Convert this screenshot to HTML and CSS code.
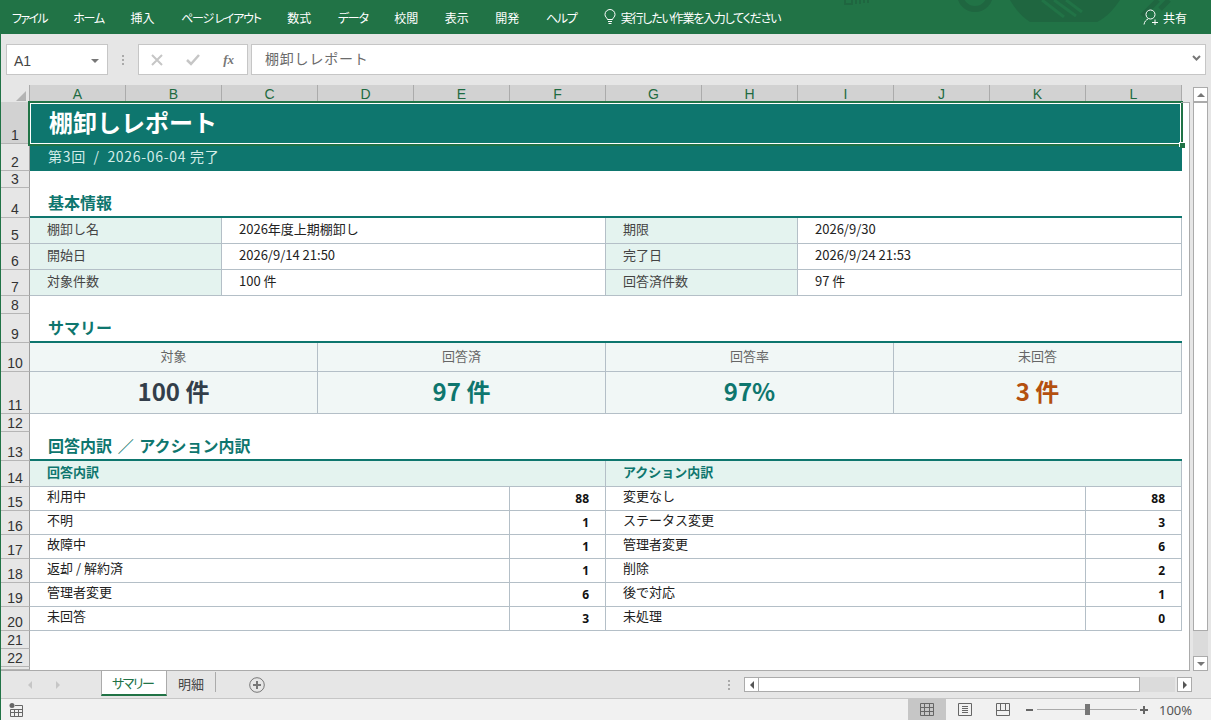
FILE: index.html
```html
<!DOCTYPE html>
<html lang="ja">
<head>
  <meta charset="UTF-8" />
  <title>棚卸しレポート - Excel</title>
  <link rel="stylesheet" href="styles.css">
</head>
<body>
<div class="app">

  <!-- ribbon tabs -->
  <header class="titlebar">
    <svg class="titlebar-art" width="360" height="34" viewBox="0 0 360 34" fill="none">
      <path d="M25 0v4h7V0M36 0v4M40 0v4M44 0v3M48 0v3" stroke="#1f6640" stroke-width="2"/>
      <circle cx="155" cy="-6" r="15" stroke="#1f6640" stroke-width="6"/>
      <path d="M190 0c5 9 12 17 20 22h67c10-5 17-13 23-22z" fill="#1f6640"/>
      <path d="M222 0l22 17M234 0l22 16M246 0l16 12" stroke="#217346" stroke-width="3"/>
      <path d="M322 16L338 0M340 9l9-9" stroke="#1f6640" stroke-width="5"/>
    </svg>
    <nav class="menu">
      <span class="file">ファイル</span><span class="kana">ホーム</span><span>挿入</span><span class="kana">ページ レイアウト</span><span>数式</span><span class="kana">データ</span><span>校閲</span><span>表示</span><span>開発</span><span class="kana">ヘルプ</span>
    </nav>
    <div class="tell-me">
      <svg width="12" height="16" viewBox="0 0 12 16" fill="none" stroke="#fff"><path d="M3.500 10.500C3 8.500 1 8 1 5.500a5 5 0 0 1 10 0C11 8 9 8.500 8.500 10.500zM4 12.500h4M4.500 14.500h3"/></svg>
      <span class="kana">実行したい作業を入力してください</span>
    </div>
    <div class="share">
      <svg width="16" height="16" viewBox="0 0 16 16" fill="none" stroke="#fff"><circle cx="7.500" cy="5.500" r="4.500"/><path d="M1 15.500c.5-3 2-4.500 4-5.500M9 13.500h6M12 10.500v6"/></svg>
      <span>共有</span>
    </div>
  </header>

  <!-- name box + formula bar -->
  <div class="formula-row">
    <div class="name-box"><span>A1</span><i class="caret-down"></i></div>
    <div class="grip"></div>
    <div class="fx-buttons">
      <svg width="12" height="12" viewBox="0 0 12 12" stroke="#c6c6c6" stroke-width="2"><path d="M1 1l10 10M11 1L1 11"/></svg>
      <svg width="14" height="12" viewBox="0 0 14 12" fill="none" stroke="#c6c6c6" stroke-width="2.500"><path d="M1 6l4 4 8-9"/></svg>
      <em>fx</em>
    </div>
    <div class="formula-input">
      <span>棚卸しレポート</span>
      <svg width="9" height="6" viewBox="0 0 9 6" fill="none" stroke="#777" stroke-width="2"><path d="M1 1l3.500 3.500L8 1"/></svg>
    </div>
  </div>

  <!-- worksheet -->
  <div class="workarea">
    <div class="sheet">
      <div class="corner"><i></i></div>
      <div class="col-head">A</div><div class="col-head">B</div><div class="col-head">C</div><div class="col-head">D</div><div class="col-head">E</div><div class="col-head">F</div><div class="col-head">G</div><div class="col-head">H</div><div class="col-head">I</div><div class="col-head">J</div><div class="col-head">K</div><div class="col-head">L</div>

      <div class="row-head on">1</div>
      <div class="cell title span-12">棚卸しレポート</div>
      <div class="row-head">2</div>
      <div class="cell subtitle span-12">第3回  /  2026-06-04 完了</div>
      <div class="row-head">3</div>
      <div class="span-12"></div>

      <div class="row-head">4</div>
      <div class="cell section span-12">基本情報</div>
      <div class="row-head">5</div>
      <div class="cell label span-2">棚卸し名</div>
      <div class="cell value span-4">2026年度上期棚卸し</div>
      <div class="cell label span-2">期限</div>
      <div class="cell value span-4">2026/9/30</div>
      <div class="row-head">6</div>
      <div class="cell label span-2">開始日</div>
      <div class="cell value span-4">2026/9/14 21:50</div>
      <div class="cell label span-2">完了日</div>
      <div class="cell value span-4">2026/9/24 21:53</div>
      <div class="row-head">7</div>
      <div class="cell label span-2">対象件数</div>
      <div class="cell value span-4">100 件</div>
      <div class="cell label span-2">回答済件数</div>
      <div class="cell value span-4">97 件</div>
      <div class="row-head">8</div>
      <div class="span-12"></div>

      <div class="row-head">9</div>
      <div class="cell section span-12">サマリー</div>
      <div class="row-head">10</div>
      <div class="cell kpi-label span-3">対象</div>
      <div class="cell kpi-label span-3">回答済</div>
      <div class="cell kpi-label span-3">回答率</div>
      <div class="cell kpi-label span-3">未回答</div>
      <div class="row-head">11</div>
      <div class="cell kpi span-3">100 件</div>
      <div class="cell kpi teal span-3">97 件</div>
      <div class="cell kpi teal span-3">97%</div>
      <div class="cell kpi orange span-3">3 件</div>
      <div class="row-head">12</div>
      <div class="span-12"></div>

      <div class="row-head">13</div>
      <div class="cell section span-12">回答内訳 ／ アクション内訳</div>
      <div class="row-head">14</div>
      <div class="cell list-head span-6">回答内訳</div>
      <div class="cell list-head span-6">アクション内訳</div>

      <div class="row-head">15</div>
      <div class="cell item span-5">利用中</div><div class="cell count">88</div>
      <div class="cell item span-5">変更なし</div><div class="cell count">88</div>
      <div class="row-head">16</div>
      <div class="cell item span-5">不明</div><div class="cell count">1</div>
      <div class="cell item span-5">ステータス変更</div><div class="cell count">3</div>
      <div class="row-head">17</div>
      <div class="cell item span-5">故障中</div><div class="cell count">1</div>
      <div class="cell item span-5">管理者変更</div><div class="cell count">6</div>
      <div class="row-head">18</div>
      <div class="cell item span-5">返却 / 解約済</div><div class="cell count">1</div>
      <div class="cell item span-5">削除</div><div class="cell count">2</div>
      <div class="row-head">19</div>
      <div class="cell item span-5">管理者変更</div><div class="cell count">6</div>
      <div class="cell item span-5">後で対応</div><div class="cell count">1</div>
      <div class="row-head">20</div>
      <div class="cell item span-5">未回答</div><div class="cell count">3</div>
      <div class="cell item span-5">未処理</div><div class="cell count">0</div>

      <div class="row-head">21</div>
      <div class="span-12"></div>
      <div class="row-head">22</div>
      <div class="span-12"></div>
      <div class="row-head"></div>
      <div class="span-12"></div>

      <div class="selection"><i></i></div>
    </div>

    <div class="vscroll">
      <button class="sb-btn"><i class="tri-up"></i></button>
      <div class="vthumb"></div>
      <div class="vtrack"></div>
      <button class="sb-btn"><i class="tri-down"></i></button>
    </div>
  </div>

  <!-- sheet tabs + horizontal scroll -->
  <div class="tabbar">
    <div class="tab-nav"><i class="tri-left pale"></i><i class="tri-right pale"></i></div>
    <div class="tab active">サマリー</div>
    <div class="tab">明細</div>
    <div class="tab-sep"></div>
    <svg class="add-sheet" width="16" height="16" viewBox="0 0 16 16" fill="none" stroke="#777"><circle cx="8" cy="8" r="7.300"/><path d="M8 4v8M4 8h8" stroke-width="2"/></svg>
    <div class="grip small"></div>
    <div class="hscroll">
      <button class="sb-btn"><i class="tri-left"></i></button>
      <div class="hthumb"></div>
      <div class="htrack"></div>
      <button class="sb-btn"><i class="tri-right"></i></button>
    </div>
  </div>

  <!-- status bar -->
  <footer class="statusbar">
    <svg class="macro" width="14" height="14" viewBox="0 0 14 14" fill="none" stroke="#666"><circle cx="3" cy="2.500" r="2.500" fill="#666" stroke="none"/><path d="M6 2.500h7.500v11H1.500V6.500h12M1.500 9.500h12M5.500 6.500v7M9.500 6.500v7"/></svg>
    <div class="view active"><svg width="14" height="13" viewBox="0 0 14 13" fill="none" stroke="#666"><path d="M.5.500h13v12H.5zM.5 4.500h13M.5 8.500h13M4.500.500v12M9.500.500v12"/></svg></div>
    <div class="view"><svg width="14" height="13" viewBox="0 0 14 13" fill="none" stroke="#666"><path d="M.5.500h13v12H.5zM4 3.500h6M4 5.500h6M4 7.500h6M4 9.500h6"/></svg></div>
    <div class="view"><svg width="14" height="13" viewBox="0 0 14 13" fill="none" stroke="#666"><path d="M.5.500h13v12H.5zM.5 7.500h13M4.500.500v7M9.500.500v7"/></svg></div>
    <div class="zoom">
      <b class="minus"></b>
      <div class="slider"><i></i></div>
      <b class="plus"></b>
    </div>
    <span class="pct">100%</span>
  </footer>
</div>
</body>
</html>
```

FILE: styles.css
```css
* {
  box-sizing: border-box;
}

body {
  margin: 0;
  overflow: hidden;
  font-family: "Noto Sans CJK JP", "Noto Sans", sans-serif;
  color: #222;
  background: #e6e6e6;
}

.app {
  width: 1211px;
  height: 720px;
  display: flex;
  flex-direction: column;
  border-left: 1px solid #217346;
}

/* ribbon tabs */
.titlebar {
  position: relative;
  height: 34px;
  flex: none;
  margin-left: -1px;
  display: flex;
  align-items: center;
  background: #217346;
  color: #fff;
  font-size: 12px;
  font-feature-settings: "palt";
}

.titlebar-art {
  position: absolute;
  left: 820px;
  top: 0;
}

.menu {
  position: relative;
  display: flex;
  gap: 26.5px;
  margin-left: 12px;
}

.kana {
  letter-spacing: -1.2px;
}

.file {
  letter-spacing: -1.7px;
}

.tell-me {
  position: relative;
  display: flex;
  align-items: center;
  gap: 5px;
  margin-left: 27px;
}

.share {
  position: relative;
  display: flex;
  align-items: center;
  gap: 4px;
  margin-left: auto;
  margin-right: 24px;
}

/* formula bar */
.formula-row {
  height: 51px;
  flex: none;
  display: flex;
  align-items: flex-start;
  padding: 10px 5px 0 5px;
  background: #e6e6e6;
}

.name-box,
.fx-buttons,
.formula-input {
  height: 31px;
  display: flex;
  align-items: center;
  background: #fff;
  border: 1px solid #c6c6c6;
}

.name-box {
  width: 102px;
  padding: 2px 8px 0 7px;
  justify-content: space-between;
  font-family: "Liberation Sans", sans-serif;
  font-size: 14px;
  color: #444;
}

.caret-down {
  border: 4px solid transparent;
  border-top: 4px solid #777;
  border-bottom: 0;
}

.grip {
  width: 30px;
  height: 11px;
  margin-top: 10px;
  background: radial-gradient(circle, #aaa 1px, transparent 1.2px) center top / 2px 4px repeat-y;
}

.grip.small {
  width: 3px;
  margin: 0 0 0 462px;
}

.fx-buttons {
  width: 110px;
  justify-content: space-between;
  padding: 0 13px 0 12px;
}

.fx-buttons em {
  font-family: "Liberation Serif", serif;
  font-size: 13px;
  font-weight: bold;
  color: #777;
}

.formula-input {
  flex: 1;
  margin-left: 3px;
  justify-content: space-between;
  padding: 0 4px 3px 13px;
  font-size: 14px;
  letter-spacing: 0.8px;
  color: #6b6b6b;
}

/* worksheet */
.workarea {
  height: 586px;
  flex: none;
  display: flex;
}

.sheet {
  position: relative;
  width: 1189px;
  flex: none;
  display: grid;
  grid-template-columns: 29px repeat(12, 96px);
  grid-template-rows: 17px 42px 27px 17px 30px 26px 26px 26px 18px 29px 29px 42px 18px 29px 26px 24px 24px 24px 24px 24px 24px 18px 18px 3px;
  justify-content: start;
  background: linear-gradient(#e6e6e6 17px, #fff 17px);
  border-bottom: 1px solid #ababab;
  overflow: hidden;
}

/* white gutter to the right of column L */
.sheet::after {
  content: "";
  position: absolute;
  right: 0;
  top: 17px;
  bottom: 0;
  width: 8px;
  border-top: 1px solid #ababab;
  border-right: 1px solid #ababab;
}

.corner {
  position: relative;
  background: #e6e6e6;
  border-right: 1px solid #ababab;
}

.corner i {
  position: absolute;
  right: 3px;
  bottom: 1px;
  border-style: solid;
  border-width: 0 0 10px 10px;
  border-color: transparent transparent #b4b4b4 transparent;
}

.col-head {
  display: flex;
  align-items: flex-end;
  justify-content: center;
  background: #d2d2d2;
  border-right: 1px solid #ababab;
  border-bottom: 1px solid #217346;
  font-family: "Liberation Sans", sans-serif;
  font-size: 14px;
  line-height: 14px;
  color: #1e6b41;
}

.row-head {
  display: flex;
  align-items: flex-end;
  justify-content: center;
  background: #e6e6e6;
  border-right: 1px solid #9f9f9f;
  border-bottom: 1px solid #b5b5b5;
  font-family: "Liberation Sans", sans-serif;
  font-size: 14px;
  line-height: 16px;
  color: #333;
}

.row-head.on {
  background: #d2d2d2;
}

.span-2 { grid-column: span 2; }
.span-3 { grid-column: span 3; }
.span-4 { grid-column: span 4; }
.span-5 { grid-column: span 5; }
.span-6 { grid-column: span 6; }
.span-12 { grid-column: span 12; }

.cell {
  display: flex;
  align-items: center;
  font-size: 13px;
  line-height: 16px;
  white-space: nowrap;
}

.title {
  padding: 0 0 3px 19px;
  background: #0e766e;
  color: #fff;
  font-size: 24px;
  font-weight: 700;
}

.subtitle {
  padding-left: 18px;
  padding-bottom: 4px;
  background: #0e766e;
  color: #d2ece8;
  font-size: 14px;
  letter-spacing: 0.7px;
  white-space: pre;
}

.section {
  align-items: flex-end;
  padding: 0 0 6px 18px;
  border-bottom: 2px solid #0e766e;
  color: #0e766e;
  font-size: 16px;
  font-weight: 700;
  word-spacing: 2px;
}

.label {
  padding: 0 0 3px 17px;
  background: #e4f3ef;
  border-right: 1px solid #b4bfc7;
  border-bottom: 1px solid #b4bfc7;
  color: #444;
}

.value {
  padding: 0 0 3px 17px;
  border-right: 1px solid #b4bfc7;
  border-bottom: 1px solid #b4bfc7;
  color: #222;
}

.kpi-label,
.kpi {
  justify-content: center;
  background: #f1f7f6;
  border-right: 1px solid #b4bfc7;
  border-bottom: 1px solid #b4bfc7;
}

.kpi-label {
  padding-bottom: 3px;
  color: #666;
}

.kpi {
  padding-bottom: 4px;
  color: #333e4a;
  font-size: 24px;
  font-weight: 700;
}

.kpi.teal {
  color: #0e766e;
}

.kpi.orange {
  color: #b4500f;
}

.list-head {
  padding: 0 0 3px 17px;
  background: #e4f3ef;
  border-right: 1px solid #b4bfc7;
  border-bottom: 1px solid #b4bfc7;
  color: #0e766e;
  font-weight: 700;
}

.item {
  align-items: flex-start;
  padding: 1px 0 0 17px;
  border-right: 1px solid #b4bfc7;
  border-bottom: 1px solid #b4bfc7;
}

.count {
  justify-content: flex-end;
  padding-right: 16px;
  border-right: 1px solid #b4bfc7;
  border-bottom: 1px solid #b4bfc7;
  color: #111;
  font-family: "Noto Sans", sans-serif;
  font-size: 12px;
  font-weight: 700;
}

/* A1 cell selection */
.selection {
  position: absolute;
  left: 27px;
  top: 16px;
  width: 1155px;
  height: 45px;
  border: 2px solid #217346;
  pointer-events: none;
}

.selection::before {
  content: "";
  position: absolute;
  inset: 0;
  border: 1px solid #fff;
}

.selection i {
  position: absolute;
  right: -4px;
  bottom: -4px;
  width: 5px;
  height: 5px;
  background: #217346;
  box-shadow: -1px -1px 0 #fff;
}

/* scrollbars */
.vscroll {
  width: 21px;
  display: flex;
  flex-direction: column;
  padding: 2px 0 0 3px;
  background: #e6e6e6;
}

.vscroll > * {
  width: 15px;
}

.vthumb {
  height: 529px;
  background: #fff;
  border: 1px solid #ababab;
}

.vtrack {
  flex: 1;
  background: #dbdbdb;
}

.sb-btn {
  flex: none;
  width: 15px;
  height: 15px;
  padding: 0;
  display: flex;
  align-items: center;
  justify-content: center;
  background: #fff;
  border: 1px solid #ababab;
}

.tri-up { border: 4px solid transparent; border-top: 0; border-bottom-color: #777; }
.tri-down { border: 4px solid transparent; border-bottom: 0; border-top-color: #777; }
.tri-left { border: 4px solid transparent; border-left: 0; border-right-color: #555; }
.tri-right { border: 4px solid transparent; border-right: 0; border-left-color: #555; }
.tri-left.pale { border-right-color: #c6c6c6; }
.tri-right.pale { border-left-color: #c6c6c6; }

.tabbar {
  height: 28px;
  flex: none;
  display: flex;
  align-items: center;
  background: #e6e6e6;
  border-bottom: 1px solid #c6c6c6;
}

.tab-nav {
  width: 100px;
  display: flex;
  gap: 24px;
  padding-left: 27px;
}

.tab {
  height: 25px;
  align-self: flex-start;
  display: flex;
  align-items: center;
  padding: 0 0 0 11px;
  width: 48px;
  font-size: 13px;
  white-space: nowrap;
  color: #444;
}

.tab.active {
  width: 66px;
  padding-left: 10px;
  background: #fff;
  color: #217346;
  font-feature-settings: "palt";
  letter-spacing: -1.5px;
  border-left: 1px solid #ababab;
  border-right: 1px solid #ababab;
  border-bottom: 2px solid #217346;
}

.tab-sep {
  width: 1px;
  height: 20px;
  margin-top: -5px;
  background: #ababab;
}

.add-sheet {
  margin-left: 33px;
}

.hscroll {
  height: 15px;
  display: flex;
  margin-left: 14px;
}

.hthumb {
  width: 381px;
  background: #fff;
  border: 1px solid #ababab;
  border-left: 0;
}

.htrack {
  width: 35px;
  margin-right: 2px;
  background: #dbdbdb;
}

/* status bar */
.statusbar {
  height: 21px;
  flex: none;
  display: flex;
  align-items: center;
  background: #f1f1f1;
  font-size: 13px;
  color: #555;
}

.macro {
  margin-left: 8px;
  margin-right: 885px;
}

.view {
  width: 38px;
  height: 21px;
  display: flex;
  align-items: center;
  justify-content: center;
}

.view.active {
  background: #c6c6c6;
}

.zoom {
  display: flex;
  align-items: center;
  gap: 4px;
  margin-left: 4px;
}

.minus {
  width: 7px;
  height: 2px;
  background: #666;
}

.plus {
  width: 8px;
  height: 8px;
  margin-left: -1px;
  background: linear-gradient(#666, #666) center / 100% 2px no-repeat, linear-gradient(#666, #666) center / 2px 100% no-repeat;
}

.slider {
  position: relative;
  width: 100px;
  height: 1px;
  background: #aaa;
}

.slider i {
  position: absolute;
  left: 48px;
  top: -5px;
  width: 5px;
  height: 11px;
  background: #777;
}

.pct {
  margin-left: 11px;
  font-family: "Noto Sans", sans-serif;
}
```
